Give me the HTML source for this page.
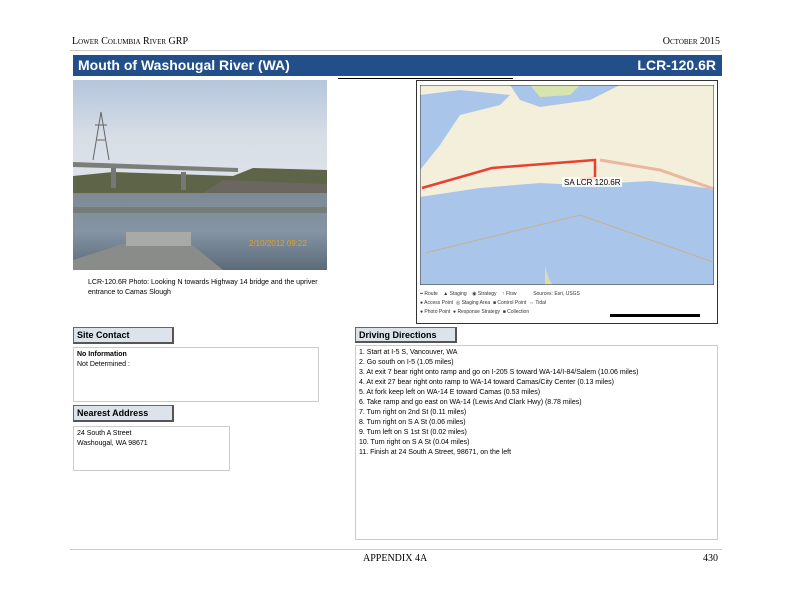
<!DOCTYPE html>
<html><head><style>
body{margin:0;width:792px;height:612px;background:#fff;position:relative;font-family:"Liberation Sans",sans-serif;overflow:hidden}
.a{position:absolute}
.lbl{position:absolute;background:#dde3ea;border:1px solid #666;border-right:2px solid #555;border-bottom:2px solid #555;font-size:9px;font-weight:bold;padding-left:3px;box-sizing:border-box;line-height:14px}
.box{position:absolute;border:1px solid #ccc;box-sizing:border-box;font-size:7px;line-height:10px;padding:2px 3px}
</style></head><body>
<div class="a" style="left:72px;top:36px;font-family:'Liberation Serif',serif;font-size:10px;font-variant:small-caps">Lower Columbia River GRP</div>
<div class="a" style="right:72px;top:36px;font-family:'Liberation Serif',serif;font-size:10px;font-variant:small-caps">October 2015</div>
<div class="a" style="left:70px;top:50px;width:652px;height:1px;background:#ccc"></div>
<div class="a" style="left:73px;top:55px;width:649px;height:21px;background:#224f8a;color:#fff;font-weight:bold;font-size:14px;line-height:21px"><span style="padding-left:5px">Mouth of Washougal River (WA)</span><span style="position:absolute;right:6px">LCR-120.6R</span></div>
<div class="a" style="left:338px;top:78px;width:175px;height:1px;background:#000"></div>
<svg class="a" style="left:73px;top:80px" width="254" height="190">
<defs><linearGradient id="s" x1="0" y1="0" x2="0" y2="1"><stop offset="0" stop-color="#b4c6dc"/><stop offset=".5" stop-color="#d8dee6"/><stop offset="1" stop-color="#dfe4ec"/></linearGradient>
<linearGradient id="w" x1="0" y1="0" x2="0" y2="1"><stop offset="0" stop-color="#7e8a92"/><stop offset=".5" stop-color="#8494a4"/><stop offset="1" stop-color="#5c6a78"/></linearGradient></defs>
<rect width="254" height="115" fill="url(#s)"/>
<path d="M0 96 L40 92 160 96 180 88 254 90 254 113 0 113Z" fill="#5e6448"/>
<path d="M130 113 L150 100 254 104 254 114Z" fill="#6a6660"/>
<rect y="113" width="254" height="77" fill="url(#w)"/>
<rect y="127" width="254" height="6" fill="#6e7060" opacity=".6"/>
<path d="M0 82 L165 88 L165 92 L0 87Z" fill="#7c7e7a"/>
<rect x="38" y="88" width="5" height="20" fill="#777"/><rect x="108" y="92" width="5" height="18" fill="#777"/>
<path d="M20 80 L28 32 L36 80 M24 60h8 M22 45h12" stroke="#666" fill="none"/>
<path d="M0 190 L0 180 L50 164 L118 164 L150 190Z" fill="#8a8c8a"/>
<rect x="53" y="152" width="65" height="14" fill="#a8aaa8"/>
<text x="176" y="166" font-size="8" fill="#e8a020">2/10/2012 09:22</text>
</svg>
<div class="a" style="left:88px;top:278px;width:245px;font-size:7px;line-height:10px">LCR-120.6R Photo: Looking N towards Highway 14 bridge and the upriver entrance to Camas Slough</div>
<div class="a" style="left:416px;top:80px;width:302px;height:244px;border:1px solid #333;box-sizing:border-box;background:#fff"></div>
<svg class="a" style="left:420px;top:85px" width="294" height="200">
<rect width="294" height="200" fill="#a9c6ea"/>
<path d="M0 0H294V104L230 96 160 100 120 98 60 103 0 112Z" fill="#f3efda"/>
<path d="M0 10 L40 5 90 10 80 20 40 30 20 60 0 85Z" fill="#a9c6ea"/>
<path d="M90 0 L200 0 170 15 120 22 100 15Z" fill="#a9c6ea"/>
<path d="M110 0H160L150 10 120 12Z" fill="#d8e4b0"/>
<path d="M180 75 L240 85 294 104" stroke="#eab8a0" stroke-width="3" fill="none"/>
<path d="M2 103 L72 83 175 75 175 93 160 94" stroke="#e94030" stroke-width="2.5" fill="none"/>
<path d="M5 168 L160 130 293 177" stroke="#c8b090" fill="none"/>
<path d="M125 180 Q128 195 133 200 L125 200Z" fill="#dcdcb0"/>
<rect x="142" y="92" width="60" height="10" fill="#fff" opacity=".8"/>
<text x="144" y="100" font-size="8">SA LCR 120.6R</text>
<rect x="0" y="0" width="294" height="200" fill="none" stroke="#333"/>
</svg>
<div class="a" style="left:420px;top:290px;font-size:5px;color:#333;line-height:9px;width:290px">━ Route &nbsp;&nbsp;&nbsp;▲ Staging &nbsp;&nbsp;&nbsp;◉ Strategy &nbsp;&nbsp;&nbsp;↑ Flow &nbsp;&nbsp;&nbsp;&nbsp;&nbsp;&nbsp;&nbsp;&nbsp;&nbsp;&nbsp; Sources: Esri, USGS<br>● Access Point &nbsp;◎ Staging Area &nbsp;■ Control Point &nbsp;⇔ Tidal<br>● Photo Point &nbsp;● Response Strategy &nbsp;■ Collection</div>
<div class="a" style="left:610px;top:314px;width:90px;height:3px;background:#000"></div>
<div class="lbl" style="left:73px;top:327px;width:101px;height:17px">Site Contact</div>
<div class="box" style="left:73px;top:347px;width:246px;height:55px"><b>No Information</b><br>Not Determined :</div>
<div class="lbl" style="left:73px;top:405px;width:101px;height:17px">Nearest Address</div>
<div class="box" style="left:73px;top:426px;width:157px;height:45px">24 South A Street<br>Washougal, WA 98671</div>
<div class="lbl" style="left:355px;top:327px;width:102px;height:16px">Driving Directions</div>
<div class="box" style="left:355px;top:345px;width:363px;height:195px">1. Start at I-5 S, Vancouver, WA<br>2. Go south on I-5 (1.05 miles)<br>3. At exit 7 bear right onto ramp and go on I-205 S toward WA-14/I-84/Salem (10.06 miles)<br>4. At exit 27 bear right onto ramp to WA-14 toward Camas/City Center (0.13 miles)<br>5. At fork keep left on WA-14 E toward Camas (0.53 miles)<br>6. Take ramp and go east on WA-14 (Lewis And Clark Hwy) (8.78 miles)<br>7. Turn right on 2nd St (0.11 miles)<br>8. Turn right on S A St (0.06 miles)<br>9. Turn left on S 1st St (0.02 miles)<br>10. Turn right on S A St (0.04 miles)<br>11. Finish at 24 South A Street, 98671, on the left</div>
<div class="a" style="left:70px;top:549px;width:652px;height:1px;background:#ccc"></div>
<div class="a" style="left:363px;top:553px;font-family:'Liberation Serif',serif;font-size:10px">APPENDIX 4A</div>
<div class="a" style="right:74px;top:553px;font-family:'Liberation Serif',serif;font-size:10px">430</div>
</body></html>
